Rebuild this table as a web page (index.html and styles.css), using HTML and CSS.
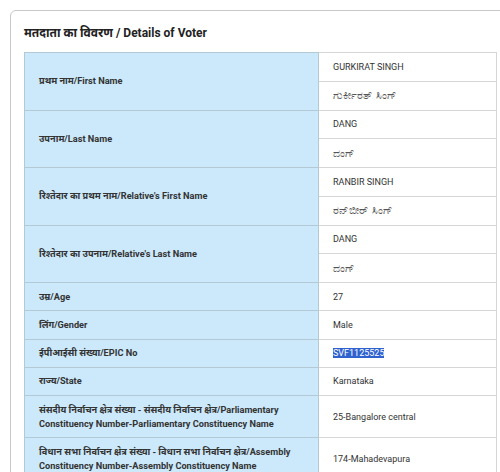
FILE: index.html
```html
<!DOCTYPE html>
<html lang="hi">
<head>
    <meta charset="UTF-8">
    <meta name="viewport" content="width=device-width, initial-scale=1.0">
    <title>Details of Voter</title>
    <link rel="stylesheet" href="styles.css">
</head>
<body>
    <div class="card">
        <h2 class="card-title">मतदाता का विवरण / Details of Voter</h2>
        <table class="voter-table">
            <tr>
                <th rowspan="2">प्रथम नाम/First Name</th>
                <td>GURKIRAT SINGH</td>
            </tr>
            <tr>
                <td class="kn">ಗುರ್ಕೀರತ್ ಸಿಂಗ್</td>
            </tr>
            <tr>
                <th rowspan="2">उपनाम/Last Name</th>
                <td>DANG</td>
            </tr>
            <tr>
                <td class="kn">ದಂಗ್</td>
            </tr>
            <tr>
                <th rowspan="2">रिश्तेदार का प्रथम नाम/Relative's First Name</th>
                <td>RANBIR SINGH</td>
            </tr>
            <tr>
                <td class="kn">ರನ್‌ಬೀರ್ ಸಿಂಗ್</td>
            </tr>
            <tr>
                <th rowspan="2">रिश्तेदार का उपनाम/Relative's Last Name</th>
                <td>DANG</td>
            </tr>
            <tr>
                <td class="kn">ದಂಗ್</td>
            </tr>
            <tr class="single">
                <th>उम्र/Age</th>
                <td>27</td>
            </tr>
            <tr class="single">
                <th>लिंग/Gender</th>
                <td>Male</td>
            </tr>
            <tr class="single">
                <th>ईपीआईसी संख्या/EPIC No</th>
                <td><span class="selected">SVF1125525</span></td>
            </tr>
            <tr class="single">
                <th>राज्य/State</th>
                <td>Karnataka</td>
            </tr>
            <tr>
                <th class="tall">संसदीय निर्वाचन क्षेत्र संख्या - संसदीय निर्वाचन क्षेत्र/Parliamentary Constituency Number-Parliamentary Constituency Name</th>
                <td>25-Bangalore central</td>
            </tr>
            <tr>
                <th class="tall">विधान सभा निर्वाचन क्षेत्र संख्या - विधान सभा निर्वाचन क्षेत्र/Assembly Constituency Number-Assembly Constituency Name</th>
                <td>174-Mahadevapura</td>
            </tr>
        </table>
    </div>
</body>
</html>
```

FILE: styles.css
```css
body {
    font-family: Roboto, "Noto Sans", sans-serif;
    background-color: #fff;
    color: #333;
    margin: 0;
    padding: 10px 0 0 10px;
    overflow: hidden;
}

.card {
    width: 520px;
    border: 1px solid #c8c8c8;
    border-radius: 6px;
    padding: 14px 0 20px 13px;
    box-sizing: border-box;
}

.card-title {
    font-size: 12px;
    font-weight: bold;
    color: #222;
    margin: 0 0 11px 0;
    line-height: 16px;
}

.voter-table {
    width: 473px;
    border-collapse: collapse;
}

.voter-table th,
.voter-table td {
    border: 1px solid #d6d6d6;
    text-align: left;
    vertical-align: middle;
    padding: 0 14px;
    height: 27.75px;
}

.voter-table .single th,
.voter-table .single td {
    height: 27.25px;
}

.voter-table th {
    width: 265px;
    background-color: #cbe9fb;
    border-color: #b4c9d6;
    font-size: 9.2px;
    font-weight: bold;
    color: #333;
    line-height: 14px;
}

.voter-table th.tall {
    height: 41px;
    padding-right: 8px;
}

.voter-table td {
    font-size: 9px;
    color: #333;
}

.voter-table td.kn {
    font-size: 11px;
    color: #555;
}

.selected {
    background-color: #2f62cf;
    color: #fff;
}
```
